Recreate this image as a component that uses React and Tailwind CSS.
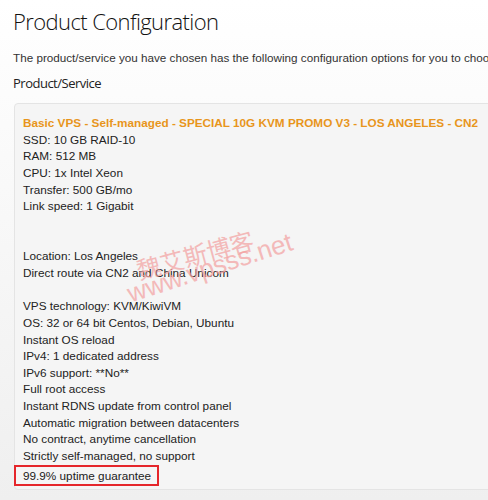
export default function App() {
  const lines1 = [
    "SSD: 10 GB RAID-10",
    "RAM: 512 MB",
    "CPU: 1x Intel Xeon",
    "Transfer: 500 GB/mo",
    "Link speed: 1 Gigabit",
  ];
  const lines2 = ["Location: Los Angeles", "Direct route via CN2 and China Unicom"];
  const lines3 = [
    "VPS technology: KVM/KiwiVM",
    "OS: 32 or 64 bit Centos, Debian, Ubuntu",
    "Instant OS reload",
    "IPv4: 1 dedicated address",
    "IPv6 support: **No**",
    "Full root access",
    "Instant RDNS update from control panel",
    "Automatic migration between datacenters",
    "No contract, anytime cancellation",
    "Strictly self-managed, no support",
  ];
  return (
    <div className="relative w-[488px] h-[500px] overflow-hidden bg-gradient-to-b from-[#ffffff] to-[#efefef]">
      <div className="pl-[13px] pt-[6px]">
        <h1 className="text-[22px] leading-[30px] font-light tracking-[-0.6px] text-[#111] whitespace-nowrap" style={{ fontFamily: '"Open Sans", sans-serif' }}>
          Product Configuration
        </h1>
        <p className="mt-[14px] text-[11.7px] leading-[16px] text-[#333] whitespace-nowrap" style={{ fontFamily: '"Liberation Sans", Arial, sans-serif' }}>
          The product/service you have chosen has the following configuration options for you to choose from.
        </p>
        <h2 className="mt-[7px] text-[13px] leading-[20px] tracking-[-0.5px] text-[#222] whitespace-nowrap" style={{ fontFamily: '"Open Sans", sans-serif' }}>
          Product/Service
        </h2>
      </div>
      <div className="ml-[14px] mt-[10px] w-[490px] h-[387px] bg-[#f5f5f5] border border-[#e4e4e4] rounded-[4px] pl-[8px] pt-[11px] text-[11.75px] leading-[16.65px] text-[#222] whitespace-nowrap" style={{ fontFamily: '"Liberation Sans", Arial, sans-serif' }}>
        <div className="font-bold text-[#e8951c]">Basic VPS - Self-managed - SPECIAL 10G KVM PROMO V3 - LOS ANGELES - CN2</div>
        {lines1.map((l) => (
          <div key={l}>{l}</div>
        ))}
        <div className="h-[33.3px]" />
        {lines2.map((l) => (
          <div key={l}>{l}</div>
        ))}
        <div className="h-[16.65px]" />
        {lines3.map((l) => (
          <div key={l}>{l}</div>
        ))}
        <div className="-ml-[9px] w-[145px] pl-[7px] border-2 border-[#e5262b] leading-[17px]">99.9% uptime guarantee</div>
      </div>
      <div
        className="absolute left-[137px] top-[258px] -rotate-[15deg] origin-left text-[24px] leading-[24px] text-[#f3a0a0] opacity-70 whitespace-nowrap pointer-events-none"
        style={{ fontFamily: '"Noto Sans CJK SC", sans-serif' }}
      >
        魏艾斯博客
      </div>
      <div
        className="absolute left-[128px] top-[281px] -rotate-[18deg] origin-left text-[26px] leading-[26px] text-[#f3a0a0] opacity-70 whitespace-nowrap pointer-events-none"
        style={{ fontFamily: '"Liberation Sans", Arial, sans-serif' }}
      >
        www.vpsss.net
      </div>
    </div>
  );
}
